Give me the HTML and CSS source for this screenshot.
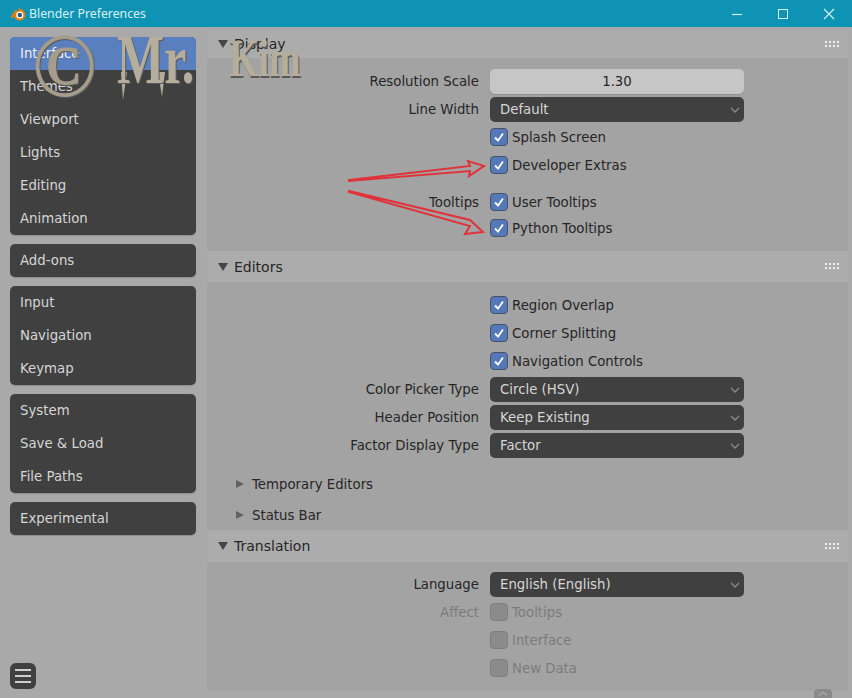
FILE: index.html
```html
<!DOCTYPE html>
<html lang="en">
<head>
  <meta charset="UTF-8">
  <meta name="viewport" content="width=device-width, initial-scale=1.0">
  <title>Blender Preferences</title>
  <link rel="stylesheet" href="styles.css">
</head>
<body>
  <!-- Window title bar -->
  <header class="titlebar">
    <svg class="logo" width="16" height="14" viewBox="0 0 16 14">
      <path d="M0.5 8.2 L5.2 5 L3 3.6 L9.5 3.4 L8 1.2 C11.5 1.4 15.5 4 15.5 8 C15.5 11.4 12.6 13.5 9.7 13.5 C6.8 13.5 4.6 12 4.4 9.4 L2 11 C1 11.2 0.4 10.6 1 9.8 L3 8.2 Z" fill="#e87d0d"/>
      <circle cx="9.8" cy="8" r="3.6" fill="#fff"/>
      <circle cx="9.8" cy="8" r="2.2" fill="#265787"/>
    </svg>
    <span class="title">Blender Preferences</span>
    <div class="win-buttons">
      <svg width="12" height="12" viewBox="0 0 12 12"><path d="M1 6.5 H11" stroke="#d6f1f7" stroke-width="1.2"/></svg>
      <svg width="12" height="12" viewBox="0 0 12 12"><rect x="1.5" y="1.5" width="9" height="9" fill="none" stroke="#d6f1f7" stroke-width="1"/></svg>
      <svg width="12" height="12" viewBox="0 0 12 12"><path d="M1 1 L11 11 M11 1 L1 11" stroke="#d6f1f7" stroke-width="1.1"/></svg>
    </div>
  </header>

  <div class="app">
    <!-- Left navigation -->
    <nav class="sidebar">
      <div class="nav-groups">
        <ul class="nav-group">
          <li class="active">Interface</li>
          <li>Themes</li>
          <li>Viewport</li>
          <li>Lights</li>
          <li>Editing</li>
          <li>Animation</li>
        </ul>
        <ul class="nav-group">
          <li>Add-ons</li>
        </ul>
        <ul class="nav-group">
          <li>Input</li>
          <li>Navigation</li>
          <li>Keymap</li>
        </ul>
        <ul class="nav-group">
          <li>System</li>
          <li>Save &amp; Load</li>
          <li>File Paths</li>
        </ul>
        <ul class="nav-group">
          <li>Experimental</li>
        </ul>
      </div>
      <div class="menu-btn"><span></span><span></span><span></span></div>
    </nav>

    <main class="content">
      <!-- Display panel -->
      <section class="panel">
        <div class="panel-header panel-header-first">
          <i class="tri-down"></i><span>Display</span>
          <svg class="grip" width="16" height="7" viewBox="0 0 16 7"><path d="M0 1 H15 M0 5 H15" stroke="#eee" stroke-width="2" stroke-dasharray="2 2"/></svg>
        </div>
        <div class="panel-body">
          <div class="row"><label class="row-label">Resolution Scale</label><div class="slider">1.30</div></div>
          <div class="row"><label class="row-label">Line Width</label><div class="select">Default<svg class="chev" width="10" height="6" viewBox="0 0 10 6"><path d="M1 1 L5 5 L9 1" fill="none" stroke="#8a8a8a" stroke-width="1.3"/></svg></div></div>
          <div class="row"><span class="row-label"></span><div class="check"><i class="box on"><svg width="12" height="12" viewBox="0 0 12 12"><path d="M2 6.5 L5 9.5 L10 2.5" fill="none" stroke="#fff" stroke-width="1.8"/></svg></i>Splash Screen</div></div>
          <div class="row"><span class="row-label"></span><div class="check"><i class="box on"><svg width="12" height="12" viewBox="0 0 12 12"><path d="M2 6.5 L5 9.5 L10 2.5" fill="none" stroke="#fff" stroke-width="1.8"/></svg></i>Developer Extras</div></div>
          <div class="row row-spaced"><label class="row-label">Tooltips</label><div class="check"><i class="box on"><svg width="12" height="12" viewBox="0 0 12 12"><path d="M2 6.5 L5 9.5 L10 2.5" fill="none" stroke="#fff" stroke-width="1.8"/></svg></i>User Tooltips</div></div>
          <div class="row row-tight"><span class="row-label"></span><div class="check"><i class="box on"><svg width="12" height="12" viewBox="0 0 12 12"><path d="M2 6.5 L5 9.5 L10 2.5" fill="none" stroke="#fff" stroke-width="1.8"/></svg></i>Python Tooltips</div></div>
        </div>
      </section>

      <!-- Editors panel -->
      <section class="panel">
        <div class="panel-header">
          <i class="tri-down"></i><span>Editors</span>
          <svg class="grip" width="16" height="7" viewBox="0 0 16 7"><path d="M0 1 H15 M0 5 H15" stroke="#eee" stroke-width="2" stroke-dasharray="2 2"/></svg>
        </div>
        <div class="panel-body panel-body-subs">
          <div class="row"><span class="row-label"></span><div class="check"><i class="box on"><svg width="12" height="12" viewBox="0 0 12 12"><path d="M2 6.5 L5 9.5 L10 2.5" fill="none" stroke="#fff" stroke-width="1.8"/></svg></i>Region Overlap</div></div>
          <div class="row"><span class="row-label"></span><div class="check"><i class="box on"><svg width="12" height="12" viewBox="0 0 12 12"><path d="M2 6.5 L5 9.5 L10 2.5" fill="none" stroke="#fff" stroke-width="1.8"/></svg></i>Corner Splitting</div></div>
          <div class="row"><span class="row-label"></span><div class="check"><i class="box on"><svg width="12" height="12" viewBox="0 0 12 12"><path d="M2 6.5 L5 9.5 L10 2.5" fill="none" stroke="#fff" stroke-width="1.8"/></svg></i>Navigation Controls</div></div>
          <div class="row"><label class="row-label">Color Picker Type</label><div class="select">Circle (HSV)<svg class="chev" width="10" height="6" viewBox="0 0 10 6"><path d="M1 1 L5 5 L9 1" fill="none" stroke="#8a8a8a" stroke-width="1.3"/></svg></div></div>
          <div class="row"><label class="row-label">Header Position</label><div class="select">Keep Existing<svg class="chev" width="10" height="6" viewBox="0 0 10 6"><path d="M1 1 L5 5 L9 1" fill="none" stroke="#8a8a8a" stroke-width="1.3"/></svg></div></div>
          <div class="row"><label class="row-label">Factor Display Type</label><div class="select">Factor<svg class="chev" width="10" height="6" viewBox="0 0 10 6"><path d="M1 1 L5 5 L9 1" fill="none" stroke="#8a8a8a" stroke-width="1.3"/></svg></div></div>
          <div class="subpanel subpanel-first"><i class="tri-right"></i><span>Temporary Editors</span></div>
          <div class="subpanel"><i class="tri-right"></i><span>Status Bar</span></div>
        </div>
      </section>

      <!-- Translation panel -->
      <section class="panel">
        <div class="panel-header panel-header-tall">
          <i class="tri-down"></i><span>Translation</span>
          <svg class="grip" width="16" height="7" viewBox="0 0 16 7"><path d="M0 1 H15 M0 5 H15" stroke="#eee" stroke-width="2" stroke-dasharray="2 2"/></svg>
        </div>
        <div class="panel-body panel-body-last">
          <div class="row"><label class="row-label">Language</label><div class="select">English (English)<svg class="chev" width="10" height="6" viewBox="0 0 10 6"><path d="M1 1 L5 5 L9 1" fill="none" stroke="#8a8a8a" stroke-width="1.3"/></svg></div></div>
          <div class="row disabled"><label class="row-label">Affect</label><div class="check"><i class="box"></i>Tooltips</div></div>
          <div class="row disabled"><span class="row-label"></span><div class="check"><i class="box"></i>Interface</div></div>
          <div class="row disabled"><span class="row-label"></span><div class="check"><i class="box"></i>New Data</div></div>
        </div>
      </section>

      <div class="scroll-tab"><svg width="10" height="5" viewBox="0 0 10 5"><path d="M1 4.5 L5 1 L9 4.5" fill="none" stroke="#aaa" stroke-width="1.2"/></svg></div>
    </main>

    <!-- Annotations drawn over the screenshot -->
    <svg class="arrows" width="852" height="671" viewBox="0 27 852 671">
      <path d="M349 180 L470 166 L468 161 L484 166 L469 176 L470 171 L349 181 Z" fill="none" stroke="#e0323a" stroke-width="2"/>
      <path d="M349 191 L470 220 L483 232 L465 234 L470 226 L349 192 Z" fill="none" stroke="#e0323a" stroke-width="2"/>
      <path d="M121 72 L123 100 L127 72 Z M158 72 L162 97 L165 72 Z" fill="#b3ac9b"/>
    </svg>
    <div class="watermark">
      <span class="wm-copy">©</span>
      <span class="wm-mr">Mr.</span>
      <span class="wm-kim">Kim</span>
    </div>
  </div>
</body>
</html>
```

FILE: styles.css
```css
* {
  box-sizing: border-box;
}
html, body {
  margin: 0;
  height: 698px;
  overflow: hidden;
}
body {
  font-family: "DejaVu Sans", sans-serif;
  font-size: 13.3px;
  color: #262626;
  background-color: #a9a9a9;
}

/* title bar */
.titlebar {
  height: 27px;
  display: flex;
  align-items: center;
  padding-left: 10px;
  background-color: #0f93b5;
}
.title {
  margin-left: 3px;
  font-family: "Noto Sans", sans-serif;
  font-size: 12.3px;
  color: #d9f0f6;
}
.win-buttons {
  margin-left: auto;
  display: flex;
  gap: 34px;
  padding-right: 17px;
}

.app {
  position: relative;
  display: flex;
  height: 671px;
}

/* sidebar */
.sidebar {
  width: 207px;
  padding: 10px 11px 9px 10px;
  display: flex;
  flex-direction: column;
  justify-content: space-between;
  flex-shrink: 0;
}
.nav-groups {
  display: flex;
  flex-direction: column;
  gap: 9px;
}
.nav-group {
  list-style: none;
  margin: 0;
  padding: 0;
  background-color: #404040;
  border-radius: 5px;
  overflow: hidden;
  box-shadow: 0 1px 1px #8c8c8c;
}
.nav-group li {
  height: 33px;
  line-height: 33px;
  padding-left: 10px;
  color: #d6d6d6;
}
.nav-group li.active {
  background-color: #5a7fbe;
  color: #eee;
}
.menu-btn {
  width: 26px;
  height: 26px;
  padding: 6px 5px;
  border-radius: 6px;
  background-color: #404040;
  display: flex;
  flex-direction: column;
  justify-content: space-between;
}
.menu-btn span {
  height: 2px;
  background-color: #cfcfcf;
}

/* panels */
.content {
  position: relative;
  width: 641px;
  padding-top: 3px;
}
.panel-header {
  height: 31px;
  display: flex;
  align-items: center;
  padding-left: 11px;
  font-size: 14px;
  background-color: #acacac;
}
.panel-header-first {
  height: 28px;
}
.panel-header-tall {
  height: 32px;
}
.panel-header span {
  margin-left: 6px;
}
.grip {
  margin-left: auto;
  margin-right: 7px;
}
.tri-down {
  width: 0;
  height: 0;
  border-left: 5px solid transparent;
  border-right: 5px solid transparent;
  border-top: 8px solid #454545;
}
.tri-right {
  width: 0;
  height: 0;
  margin-right: 8px;
  border-top: 4px solid transparent;
  border-bottom: 4px solid transparent;
  border-left: 8px solid #626262;
}
.panel-body {
  padding: 9px 0;
  background-color: #a3a3a3;
}
.panel-body-subs {
  padding-bottom: 0;
}
.panel-body-last {
  padding: 8px 0;
}

/* property rows */
.row {
  height: 28px;
  display: flex;
  align-items: center;
}
.row-spaced {
  margin-top: 9px;
}
.row-tight {
  margin-top: -2px;
}
.row-label {
  width: 272px;
  margin-right: 11px;
  text-align: right;
  flex-shrink: 0;
}
.slider, .select {
  width: 254px;
  height: 25px;
  border-radius: 5px;
  display: flex;
  align-items: center;
}
.slider {
  justify-content: center;
  background-color: #c6c6c6;
  box-shadow: 0 1px 1px #8c8c8c;
}
.select {
  position: relative;
  padding-left: 10px;
  background-color: #404040;
  color: #d6d6d6;
}
.chev {
  position: absolute;
  right: 4px;
  top: 10px;
}
.check {
  display: flex;
  align-items: center;
}
.box {
  width: 18px;
  height: 18px;
  margin-right: 4px;
  border: 1px solid #47536b;
  border-radius: 4px;
  background-color: #8b8b8b;
  display: flex;
  align-items: center;
  justify-content: center;
}
.box.on {
  background-color: #5478b8;
}
.disabled {
  color: #7b7b7b;
}
.disabled .box {
  border-color: #7e7e7e;
}
.subpanel {
  height: 31px;
  padding-left: 29px;
  display: flex;
  align-items: center;
}
.subpanel span {
  padding-top: 2px;
}
.subpanel-first {
  margin-top: 9px;
}

.scroll-tab {
  position: absolute;
  left: 607px;
  top: 662px;
  width: 18px;
  height: 9px;
  border-radius: 4px 4px 0 0;
  background-color: #8a8a8a;
  text-align: center;
  line-height: 5px;
}

/* overlays */
.arrows {
  position: absolute;
  left: 0;
  top: 0;
  pointer-events: none;
}
.watermark span {
  position: absolute;
  font-family: "Liberation Serif", serif;
  font-weight: bold;
  color: #b5ae9d;
  text-shadow: 1px 1px 0 #5a5a5a;
  transform-origin: left top;
}
.wm-copy {
  left: 32px;
  top: -7px;
  font-size: 86px;
  line-height: 86px;
  color: #a59d8c !important;
  transform: scaleY(1.05);
}
.wm-mr {
  left: 117px;
  top: -10px;
  font-size: 50px;
  line-height: 60px;
  transform: scaleY(1.4);
}
.wm-kim {
  left: 229px;
  top: -4px;
  font-size: 38px;
  line-height: 50px;
  transform: scaleY(1.4);
}
```
